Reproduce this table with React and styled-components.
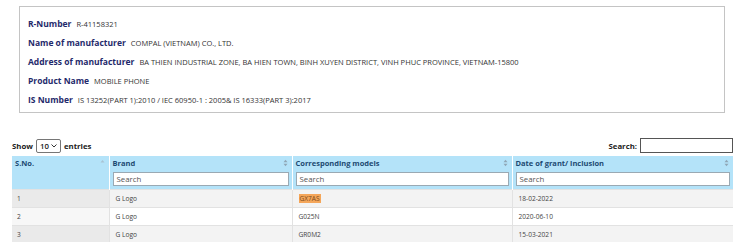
import styled, { createGlobalStyle } from "styled-components";

const GlobalStyle = createGlobalStyle`
  body {
    margin: 0;
    background: #fff;
    font-family: "Open Sans", "Liberation Sans", sans-serif;
  }
`;

const Page = styled.div`
  width: 738px;
  height: 242px;
  overflow: hidden;
`;

const InfoBox = styled.div`
  margin: 6px 13px 0 19px;
  border: 1px solid #c4c4c4;
  height: 107px;
  box-sizing: border-box;
  padding: 11px 0 0 8px;
  display: flex;
  flex-direction: column;
  gap: 5px;
`;

const InfoRow = styled.div`
  display: flex;
  align-items: baseline;
  gap: 5px;
  height: 14px;
`;

const Label = styled.span`
  font-weight: 700;
  font-size: 8.5px;
  color: #1f2a6b;
`;

const Value = styled.span`
  font-size: 7.5px;
  color: #333;
`;

const Controls = styled.div`
  margin: 25px 5px 0 12px;
  display: flex;
  justify-content: space-between;
  align-items: center;
  height: 15px;
  font-size: 7.8px;
  font-weight: 700;
  color: #222;
`;

const Group = styled.label`
  display: flex;
  align-items: center;
  gap: 3px;
`;

const Select = styled.div`
  width: 25px;
  height: 14px;
  box-sizing: border-box;
  border: 1px solid #767676;
  border-radius: 2px;
  display: flex;
  align-items: center;
  justify-content: space-between;
  padding: 0 3px;
  font-size: 7.8px;
  font-weight: 600;
`;

const SearchBox = styled.div`
  width: 93px;
  height: 15px;
  box-sizing: border-box;
  border: 1px solid #555;
  background: #fff;
`;

const Table = styled.table`
  margin: 3px 5px 0 12px;
  width: 721px;
  border-collapse: collapse;
  table-layout: fixed;
  font-size: 6.6px;
  color: #444;
`;

const HeadCell = styled.th`
  background: #b4e3f9;
  color: #1d4a72;
  font-size: 7.5px;
  font-weight: 700;
  text-align: left;
  height: 13px;
  padding: 0 3px;
  border-left: 1px solid #fff;
  position: relative;
  &:first-child {
    border-left: none;
  }
`;

const SortIcon = styled.svg`
  position: absolute;
  right: 4px;
  top: 3px;
`;

const FilterCell = styled.th`
  background: #b4e3f9;
  height: 17px;
  padding: 1px 3px 2px;
  border-left: 1px solid #fff;
  &:first-child {
    border-left: none;
  }
`;

const FilterInput = styled.div`
  height: 14px;
  box-sizing: border-box;
  border: 1px solid #9aa9b3;
  background: #fff;
  font-size: 7.8px;
  font-weight: 400;
  color: #555;
  text-align: left;
  padding-left: 3px;
  line-height: 12px;
`;

const Row = styled.tr`
  background: ${(p) => (p.$odd ? "#f3f3f3" : "#fff")};
  border-top: 1px solid #e2e2e2;
`;

const Cell = styled.td`
  height: 17px;
  padding: 0 0 0 ${(p) => (p.$first ? "5px" : "6px")};
  border-left: 1px solid #e2e2e2;
  background: ${(p) => (p.$sorted ? (p.$odd ? "#eaeaea" : "#f7f7f7") : "transparent")};
  &:first-child {
    border-left: none;
  }
`;

const Mark = styled.span`
  background: #f4a65a;
  color: #7a4a1a;
  padding: 0 1px;
`;

const info = [
  ["R-Number", "R-41158321"],
  ["Name of manufacturer", "COMPAL (VIETNAM) CO., LTD."],
  [
    "Address of manufacturer",
    "BA THIEN INDUSTRIAL ZONE, BA HIEN TOWN, BINH XUYEN DISTRICT, VINH PHUC PROVINCE, VIETNAM-15800",
  ],
  ["Product Name", "MOBILE PHONE"],
  ["IS Number", "IS 13252(PART 1):2010 / IEC 60950-1 : 2005& IS 16333(PART 3):2017"],
];

const rows = [
  ["1", "G Logo", "GX7AS", "18-02-2022", true],
  ["2", "G Logo", "G025N", "2020-06-10"],
  ["3", "G Logo", "GR0M2", "15-03-2021"],
];

const Sort = ({ asc }) => (
  <SortIcon width="5" height="8" viewBox="0 0 5 8">
    {asc ? (
      <path d="M0.5 3.5 L2.5 1 L4.5 3.5 Z" fill="#a9c3d3" />
    ) : (
      <>
        <path d="M0.5 3.3 L2.5 0.8 L4.5 3.3 Z" fill="#8fa6b6" />
        <path d="M0.5 4.7 L2.5 7.2 L4.5 4.7 Z" fill="#8fa6b6" />
      </>
    )}
  </SortIcon>
);

export default function App() {
  return (
    <Page>
      <GlobalStyle />
      <InfoBox>
        {info.map(([label, value]) => (
          <InfoRow key={label}>
            <Label>{label}</Label>
            <Value>{value}</Value>
          </InfoRow>
        ))}
      </InfoBox>

      <Controls>
        <Group>
          Show
          <Select>
            <span>10</span>
            <svg width="6" height="4" viewBox="0 0 6 4">
              <path d="M0.5 0.5 L3 3 L5.5 0.5" fill="none" stroke="#333" strokeWidth="1" />
            </svg>
          </Select>
          entries
        </Group>
        <Group>
          Search:
          <SearchBox />
        </Group>
      </Controls>

      <Table>
        <colgroup>
          <col style={{ width: "97px" }} />
          <col style={{ width: "183px" }} />
          <col style={{ width: "220px" }} />
          <col style={{ width: "221px" }} />
        </colgroup>
        <thead>
          <tr>
            <HeadCell>
              S.No.
              <Sort asc />
            </HeadCell>
            {["Brand", "Corresponding models", "Date of grant/ inclusion"].map((h) => (
              <HeadCell key={h}>
                {h}
                <Sort />
              </HeadCell>
            ))}
          </tr>
          <tr>
            <FilterCell />
            <FilterCell>
              <FilterInput>Search</FilterInput>
            </FilterCell>
            <FilterCell>
              <FilterInput>Search</FilterInput>
            </FilterCell>
            <FilterCell>
              <FilterInput>Search</FilterInput>
            </FilterCell>
          </tr>
        </thead>
        <tbody>
          {rows.map(([n, brand, model, date, hit], i) => (
            <Row key={n} $odd={i % 2 === 0}>
              <Cell $first $sorted $odd={i % 2 === 0}>
                {n}
              </Cell>
              <Cell>{brand}</Cell>
              <Cell>{hit ? <Mark>{model}</Mark> : model}</Cell>
              <Cell>{date}</Cell>
            </Row>
          ))}
        </tbody>
      </Table>
    </Page>
  );
}
